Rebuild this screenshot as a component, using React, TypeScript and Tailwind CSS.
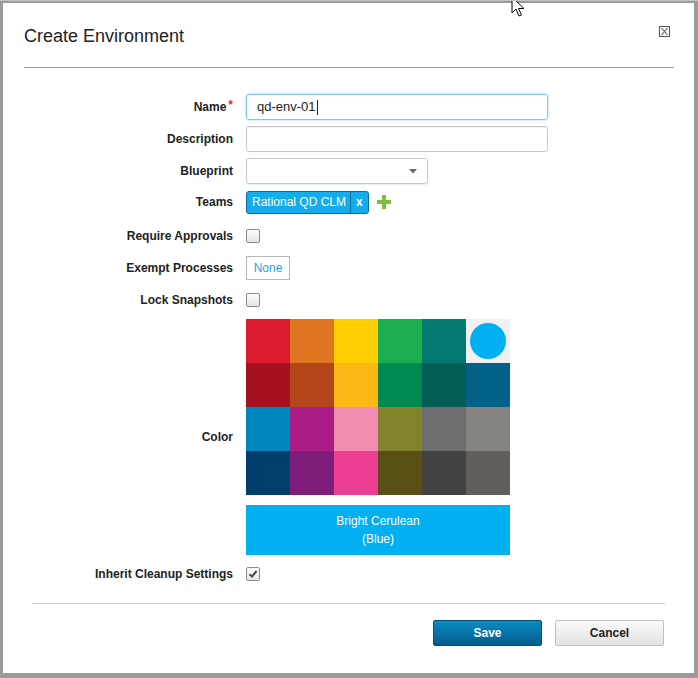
import React from "react";

const colors: string[][] = [
  ["#dc1c2e", "#df761f", "#ffcf01", "#1aae4e", "#027a70", "SELECTED"],
  ["#a61122", "#b5461a", "#fdb815", "#008a52", "#025e57", "#016189"],
  ["#0087be", "#ab1c87", "#f28bb0", "#82832d", "#6d6e70", "#858480"],
  ["#003f6a", "#7f1d7b", "#ed3e96", "#5a4f15", "#434343", "#625f5b"],
];

function Checkbox({ checked = false }: { checked?: boolean }) {
  return (
    <div className="w-[14px] h-[14px] rounded-[2px] border border-[#8a8a8a] bg-gradient-to-b from-[#fdfdfd] to-[#e6e6e6] flex items-center justify-center">
      {checked && (
        <svg width="10" height="10" viewBox="0 0 10 10">
          <path d="M1.5 5.2 L4 7.6 L8.6 2" stroke="#444" strokeWidth="2" fill="none" />
        </svg>
      )}
    </div>
  );
}

function Row({
  label,
  h,
  children,
  className = "",
}: {
  label: React.ReactNode;
  h: string;
  children: React.ReactNode;
  className?: string;
}) {
  return (
    <div className={`flex items-center ${h} ${className}`}>
      <div className="w-[230px] text-right text-[12px] font-bold text-[#222] leading-[14px]">{label}</div>
      <div className="ml-[13px] flex items-center">{children}</div>
    </div>
  );
}

export default function App() {
  return (
    <div
      className="relative w-[698px] h-[678px] bg-[#9b9b9b] border-t border-[#c4c4c4] pt-[2px] pl-[3px] pr-[4px] pb-[5px] overflow-hidden"
      style={{ fontFamily: '"Liberation Sans", Arial, sans-serif' }}
    >
      <div className="w-full h-full bg-white flex flex-col">
        {/* Header */}
        <div className="pt-[24px] pl-[21px] pr-[20px]">
          <div className="flex justify-between items-start h-[18px]">
            <div className="text-[18px] leading-[18px] text-[#222]">Create Environment</div>
            <div className="mr-[4px] mt-[-1px] w-[11px] h-[11px] border border-[#555] flex items-center justify-center">
              <svg width="9" height="9" viewBox="0 0 9 9">
                <path d="M1.5 1 L7.5 8 M7.5 1 L1.5 8" stroke="#555" strokeWidth="1.1" fill="none" />
              </svg>
            </div>
          </div>
          <div className="mt-[22px] h-px bg-[#9a9a9a]" />
        </div>

        {/* Form */}
        <div className="mt-[26px] flex flex-col">
          <Row
            label={
              <span>
                Name<span className="text-[#e0262e] ml-[2px] relative top-[-2px]">*</span>
              </span>
            }
            h="h-[26px]"
          >
            <div className="w-[302px] h-[26px] rounded-[3px] border border-[#7fc6ee] shadow-[0_0_3px_#9fd6f5] flex items-center pl-[10px] text-[13px] text-[#222]">
              qd-env-01<span className="inline-block w-px h-[15px] bg-[#222] ml-px" />
            </div>
          </Row>
          <Row label="Description" h="h-[26px]" className="mt-[6px]">
            <div className="w-[302px] h-[26px] rounded-[3px] border border-[#c8c8c8] shadow-[inset_0_1px_1px_rgba(0,0,0,0.06)]" />
          </Row>
          <Row label="Blueprint" h="h-[26px]" className="mt-[6px]">
            <div className="w-[182px] h-[26px] rounded-[3px] border border-[#c8c8c8] shadow-[0_1px_1px_rgba(0,0,0,0.08)] flex items-center justify-end pr-[10px]">
              <svg width="8" height="5" viewBox="0 0 8 5">
                <path d="M0 0 L8 0 L4 4.5 Z" fill="#666" />
              </svg>
            </div>
          </Row>
          <Row label="Teams" h="h-[24px]" className="mt-[6px]">
            <div className="h-[23px] flex items-stretch rounded-[3px] border border-[#0b6a9f] bg-[#14aceb] text-white text-[12px]">
              <div className="pl-[5px] pr-[4px] flex items-center">Rational QD CLM</div>
              <div className="border-l border-[#0b6a9f] px-[5px] flex items-center font-bold">x</div>
            </div>
            <svg className="ml-[8px]" width="14" height="14" viewBox="0 0 14 14">
              <rect x="5" y="0" width="4" height="14" fill="#7dbd3f" />
              <rect x="0" y="5" width="14" height="4" fill="#7dbd3f" />
            </svg>
          </Row>
          <Row label="Require Approvals" h="h-[24px]" className="mt-[10px]">
            <Checkbox />
          </Row>
          <Row label="Exempt Processes" h="h-[24px]" className="mt-[8px]">
            <div className="h-[24px] w-[44px] border border-[#b1b8c6] flex items-center justify-center text-[12px] text-[#1fa3e0]">
              None
            </div>
          </Row>
          <Row label="Lock Snapshots" h="h-[24px]" className="mt-[8px]">
            <Checkbox />
          </Row>
          <Row label="Color" h="h-[236px]" className="mt-[7px]">
            <div className="flex flex-col">
              <div className="grid grid-cols-6 w-[264px]">
                {colors.flat().map((c, i) =>
                  c === "SELECTED" ? (
                    <div key={i} className="w-[44px] h-[44px] bg-[#f0f0f0] flex items-center justify-center">
                      <div className="w-[36px] h-[36px] rounded-full bg-[#00b0f0]" />
                    </div>
                  ) : (
                    <div key={i} className="w-[44px] h-[44px]" style={{ backgroundColor: c }} />
                  )
                )}
              </div>
              <div className="mt-[10px] h-[50px] w-[264px] bg-[#00b0f0] text-white text-[12px] leading-[18px] pt-[7px] flex flex-col items-center">
                <div>Bright Cerulean</div>
                <div>(Blue)</div>
              </div>
            </div>
          </Row>
          <Row label="Inherit Cleanup Settings" h="h-[24px]" className="mt-[7px]">
            <Checkbox checked />
          </Row>
        </div>

        <div className="mt-[17px] mx-[29px] h-px bg-[#cfcfcf]" />

        <div className="mt-[16px] flex justify-end gap-[13px] pr-[30px]">
          <div className="w-[109px] h-[26px] rounded-[2px] border border-[#03517a] bg-gradient-to-b from-[#0a8bc5] to-[#045d8c] text-white text-[12px] font-bold flex items-center justify-center">
            Save
          </div>
          <div className="w-[109px] h-[26px] rounded-[2px] border border-[#c0c0c0] bg-gradient-to-b from-[#fbfbfb] to-[#e2e2e2] text-[#222] text-[12px] font-bold flex items-center justify-center">
            Cancel
          </div>
        </div>
      </div>

      {/* mouse cursor */}
      <svg className="absolute left-[511px] top-[-5px]" width="16" height="24" viewBox="0 0 16 24">
        <path d="M1 1 L1 17 L5 13 L8 20 L10.5 19 L7.5 12.5 L13 12.5 Z" fill="white" stroke="black" strokeWidth="1" />
      </svg>
    </div>
  );
}
